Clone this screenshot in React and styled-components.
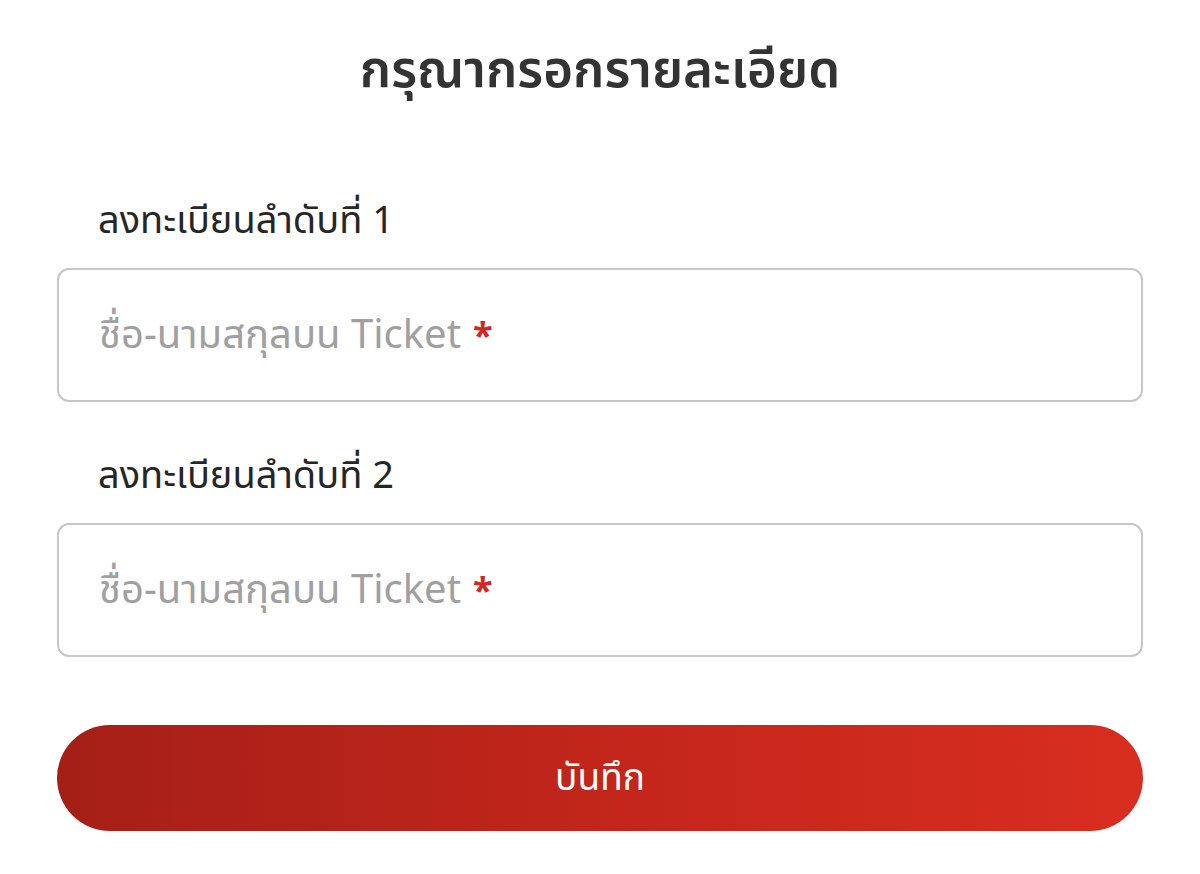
import styled, { createGlobalStyle } from "styled-components";

const GlobalStyle = createGlobalStyle`
  html, body {
    margin: 0;
    padding: 0;
    background: #ffffff;
  }
  body {
    font-family: "Noto Sans", "Noto Sans Thai", "DejaVu Sans", sans-serif;
    color: #2f2f2f;
  }
`;

const Page = styled.main`
  width: 1200px;
  min-height: 874px;
  box-sizing: border-box;
  padding: 33px 57px 0 57px;
  display: flex;
  flex-direction: column;
`;

const Title = styled.h1`
  margin: 0;
  text-align: center;
  font-size: 51px;
  font-weight: 600;
  line-height: 68px;
  color: #333333;
`;

const Form = styled.form`
  display: flex;
  flex-direction: column;
  margin-top: 91px;
`;

const Field = styled.div`
  display: flex;
  flex-direction: column;
  margin-bottom: 45px;
`;

const Label = styled.label`
  font-size: 38px;
  line-height: 52px;
  padding-left: 41px;
  margin-bottom: 24px;
  color: #262626;
`;

const InputBox = styled.div`
  position: relative;
  height: 134px;
  box-sizing: border-box;
  border: 2px solid #c6c6c6;
  border-radius: 12px;
  display: flex;
  align-items: center;
  padding: 0 40px;
`;

const Input = styled.input`
  width: 100%;
  border: none;
  outline: none;
  background: transparent;
  font-family: inherit;
  font-size: 40px;
  color: #333;
  &::placeholder {
    color: transparent;
  }
`;

const Placeholder = styled.span`
  position: absolute;
  left: 40px;
  top: 50%;
  transform: translateY(-50%);
  font-size: 40px;
  color: #a0a0a0;
  pointer-events: none;
`;

const Star = styled.span`
  color: #d0281e;
  margin-left: 12px;
  font-size: 36px;
  font-weight: 700;
`;

const SaveButton = styled.button`
  margin-top: 23px;
  height: 106px;
  border: none;
  border-radius: 53px;
  background: linear-gradient(90deg, #a51f17 0%, #c5261b 55%, #d82e20 100%);
  color: #ffffff;
  font-family: inherit;
  font-size: 37px;
  cursor: pointer;
`;

const fields = ["ลงทะเบียนลำดับที่ 1", "ลงทะเบียนลำดับที่ 2"];

export default function App() {
  return (
    <>
      <GlobalStyle />
      <Page>
        <Title>กรุณากรอกรายละเอียด</Title>
        <Form onSubmit={(e) => e.preventDefault()}>
          {fields.map((label, i) => (
            <Field key={i}>
              <Label htmlFor={`name-${i}`}>{label}</Label>
              <InputBox>
                <Input id={`name-${i}`} placeholder="ชื่อ-นามสกุลบน Ticket" />
                <Placeholder>
                  ชื่อ-นามสกุลบน Ticket<Star>*</Star>
                </Placeholder>
              </InputBox>
            </Field>
          ))}
          <SaveButton type="submit">บันทึก</SaveButton>
        </Form>
      </Page>
    </>
  );
}
